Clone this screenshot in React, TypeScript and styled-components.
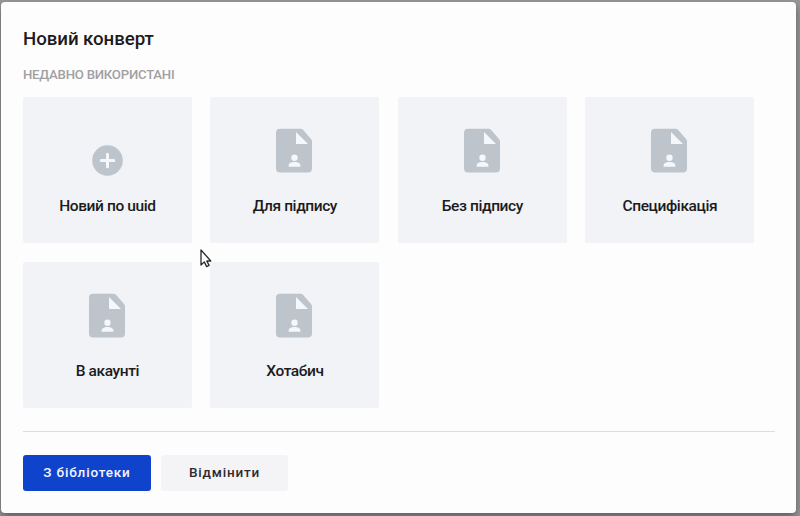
import React from 'react';
import styled, { createGlobalStyle } from 'styled-components';

const GlobalStyle = createGlobalStyle`
  * { box-sizing: border-box; }
  body {
    margin: 0;
    overflow: hidden;
    font-family: Roboto, "Liberation Sans", sans-serif;
    color: #1b1b20;
  }
`;

const Backdrop = styled.div`
  position: relative;
  height: 516px;
  padding: 1.5px 4px 3px 1px;
  background: #99979a;
`;

const Dialog = styled.section`
  height: 511.5px;
  padding: 25px 21px 0 22px;
  border-radius: 4px;
  background: #fefdfe;
  box-shadow: 0 4px 8px rgba(0, 0, 0, 0.4);
`;

const Title = styled.h1`
  margin: 0;
  font-size: 18.7px;
  line-height: 24px;
  font-weight: 500;
  letter-spacing: -0.06px;
`;

const SectionTitle = styled.h2`
  margin: 15px 0 14.5px;
  font-size: 13.2px;
  line-height: 17px;
  font-weight: 500;
  letter-spacing: -0.24px;
  text-transform: uppercase;
  color: #a1a0a2;
`;

const CardGrid = styled.div`
  display: grid;
  grid-template-columns: repeat(4, 168.8px);
  grid-auto-rows: 146px;
  gap: 18.7px;
`;

const Card = styled.button`
  display: flex;
  flex-direction: column;
  align-items: center;
  padding: 31px 0 0;
  border: 0;
  border-radius: 2px;
  background: #f2f3f6;
  color: inherit;
  font: 500 15.5px/20px Roboto, "Liberation Sans", sans-serif;
  letter-spacing: -0.4px;
`;

const IconSlot = styled.span<{ $low?: boolean }>`
  display: flex;
  align-items: ${({ $low }) => ($low ? 'flex-end' : 'flex-start')};
  height: 48px;
  margin-bottom: 20px;
  padding-right: ${({ $low }) => ($low ? '0' : '1px')};
  svg { display: block; }
`;

const Footer = styled.footer`
  display: flex;
  gap: 10px;
  margin-top: 23px;
  padding-top: 23px;
  border-top: 1px solid #dedde0;
`;

const Button = styled.button<{ $primary?: boolean }>`
  width: ${({ $primary }) => ($primary ? '128px' : '127px')};
  height: 36px;
  padding: 0 0 1px;
  border: 0;
  border-radius: 3px;
  background: ${({ $primary }) => ($primary ? '#1043cb' : '#f4f3f6')};
  color: ${({ $primary }) => ($primary ? '#f3f6ff' : '#2c2b30')};
  font: 500 13.5px/34px Roboto, "Liberation Sans", sans-serif;
  letter-spacing: 0.82px;
`;

const Pointer = styled.svg`
  position: absolute;
  left: 199px;
  top: 248px;
`;

const PlusIcon = () => (
  <svg width="31" height="31" viewBox="0 0 31 31">
    <circle cx="15.5" cy="15.5" r="15.3" fill="#bec4cb" />
    <path d="M15.5 9.2v12.6M9.2 15.5h12.6" stroke="#f5f7fb" strokeWidth="3" strokeLinecap="round" />
  </svg>
);

const DocumentIcon = () => (
  <svg width="36" height="45" viewBox="0 0 36 45">
    <path
      d="M4 .7h20.500q1.500 0 2.500 1l8 9.300q1 1 1 2.500v27.100a4 4 0 0 1-4 4H4a4 4 0 0 1-4-4V4.700a4 4 0 0 1 4-4z"
      fill="#bec4cb"
    />
    <path d="M20 4v12h12z" fill="#f4f7fb" />
    <circle cx="18.500" cy="29.700" r="3.200" fill="#f4f7fb" />
    <path d="M12.600 38.700v-1c0-2.500 2.500-3.700 5.900-3.700s5.900 1.200 5.900 3.700v1z" fill="#f4f7fb" />
  </svg>
);

const templates = [
  { label: 'Новий по uuid', blank: true },
  { label: 'Для підпису' },
  { label: 'Без підпису' },
  { label: 'Специфікація' },
  { label: 'В акаунті' },
  { label: 'Хотабич' },
];

export default function App() {
  return (
    <Backdrop>
      <GlobalStyle />
      <Dialog role="dialog">
        <Title>Новий конверт</Title>
        <SectionTitle>Недавно використані</SectionTitle>
        <CardGrid>
          {templates.map(({ label, blank }) => (
            <Card key={label}>
              <IconSlot $low={blank}>{blank ? <PlusIcon /> : <DocumentIcon />}</IconSlot>
              {label}
            </Card>
          ))}
        </CardGrid>
        <Footer>
          <Button $primary>З бібліотеки</Button>
          <Button>Відмінити</Button>
        </Footer>
      </Dialog>
      <Pointer width="14" height="21" viewBox="0 0 14 21">
        <path
          d="M2 2v15l3.300-3.100 2.300 4.700 2.500-1.200-2.300-4.400h4z"
          fill="#fff"
          stroke="#29282d"
          strokeWidth="1.300"
          strokeLinejoin="round"
        />
      </Pointer>
    </Backdrop>
  );
}
